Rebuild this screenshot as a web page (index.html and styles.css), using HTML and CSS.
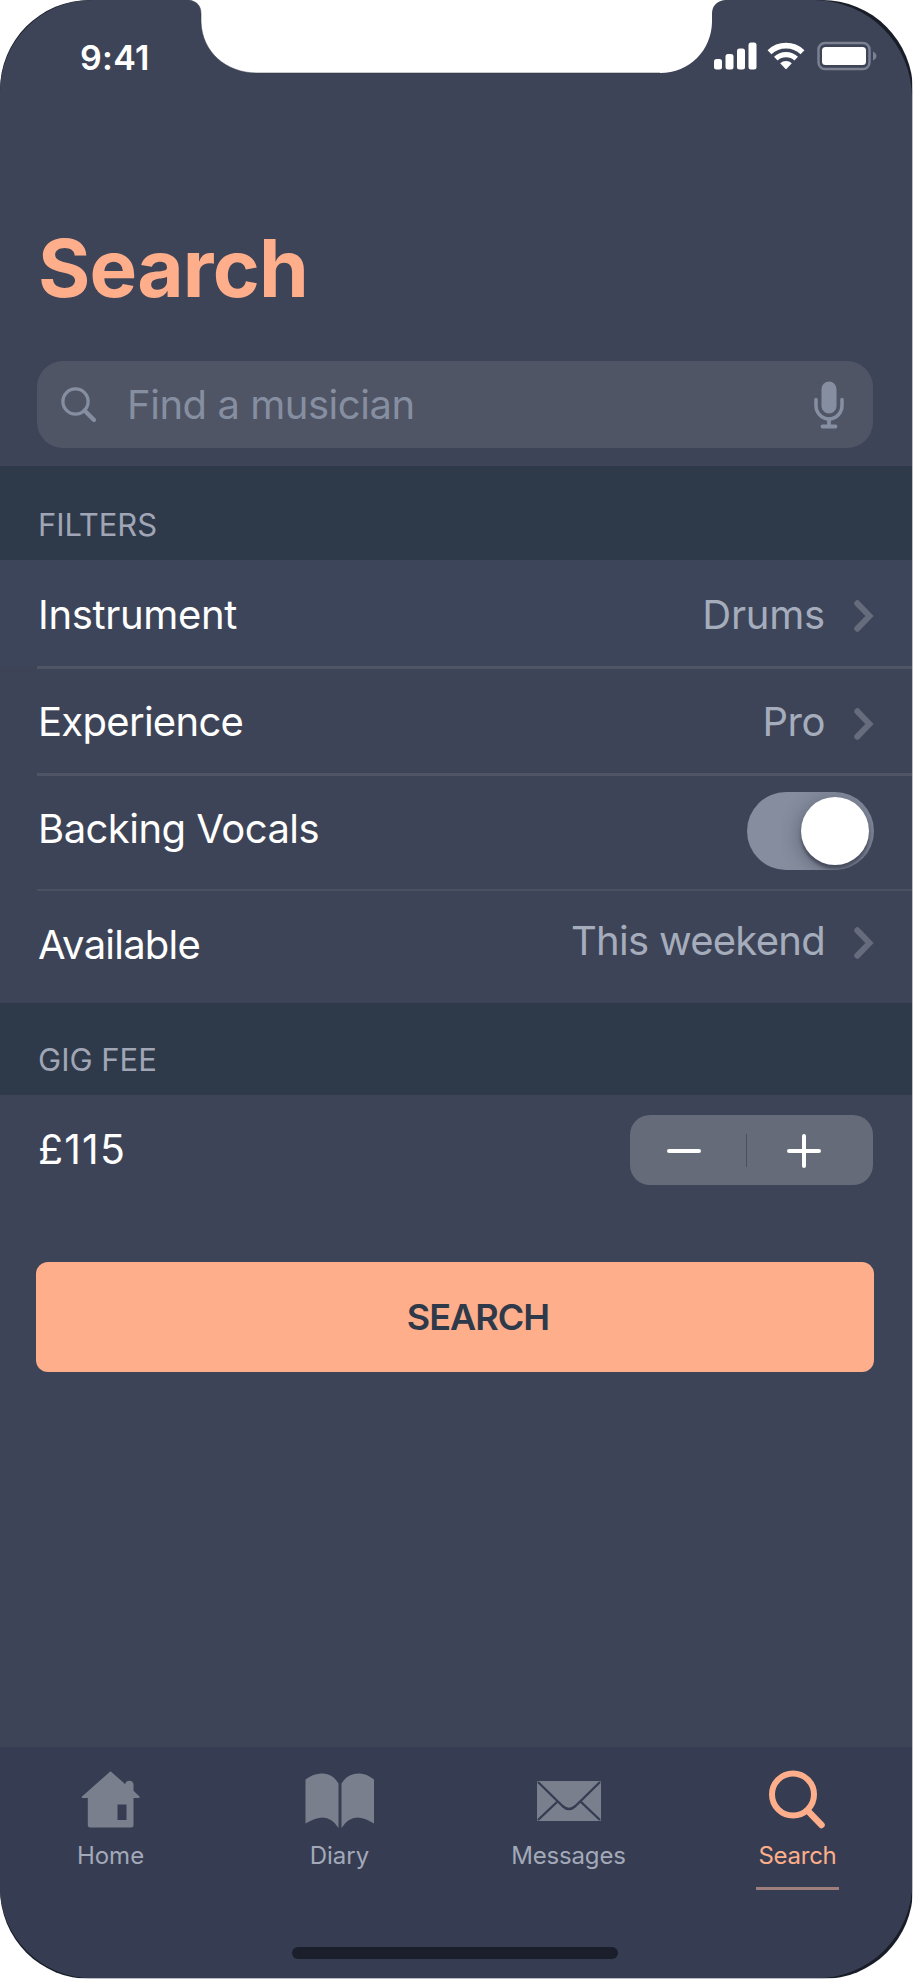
FILE: index.html
```
<!DOCTYPE html>
<html lang="en">
<head>
<meta charset="utf-8">
<title>Search</title>
<link rel="stylesheet" href="styles.css">
</head>
<body>
<div class="frame">
  <div class="phone">
    <header class="status">
      <span class="time">9:41</span>
      <div class="indicators">
        <svg class="signal" width="43" height="28" viewBox="0 0 43 28" fill="#fff">
          <rect x="0" y="17" width="8" height="10.500" rx="2.500"/>
          <rect x="11.500" y="12" width="8" height="15.500" rx="2.500"/>
          <rect x="23" y="6.500" width="8" height="21" rx="2.500"/>
          <rect x="34.500" y="0.500" width="8" height="27" rx="2.500"/>
        </svg>
        <svg class="wifi" width="38" height="28" viewBox="0 0 38 28">
          <path d="M2.500 10.200A24 24 0 0 1 35.500 10.200" fill="none" stroke="#fff" stroke-width="5.600"/>
          <path d="M8.800 16.600A15 15 0 0 1 29.200 16.600" fill="none" stroke="#fff" stroke-width="5.200"/>
          <path d="M13.200 21.200A8.600 8.600 0 0 1 24.800 21.200L19.700 26.800Q19 27.500 18.300 26.800Z" fill="#fff"/>
        </svg>
        <svg class="battery" width="60" height="30" viewBox="0 0 60 30">
          <rect x="1.500" y="2" width="51" height="26" rx="6.500" fill="none" stroke="#7b8190" stroke-width="2.500"/>
          <rect x="5" y="6" width="44" height="18" rx="3.500" fill="#fff"/>
          <path d="M56 10.500Q59.500 12.500 59.500 15T56 19.500Z" fill="#7b8190"/>
        </svg>
      </div>
    </header>

    <h1 class="title">Search</h1>

    <div class="field">
      <svg class="glass" width="36" height="36" viewBox="0 0 36 36" fill="none" stroke="#858fa1">
        <circle cx="14.500" cy="14.500" r="12.600" stroke-width="3.300"/>
        <path d="M23.500 23.500L33 33" stroke-width="4.200" stroke-linecap="round"/>
      </svg>
      <span class="placeholder">Find a musician</span>
      <svg class="mic" width="30" height="48" viewBox="0 0 30 48">
        <rect x="7.500" y="0.500" width="15" height="32" rx="7.500" fill="#858fa1"/>
        <path d="M2 18.500V24.500A13 13.500 0 0 0 28 24.500V18.500" fill="none" stroke="#858fa1" stroke-width="3.500" stroke-linecap="round"/>
        <path d="M15 38V45M8.500 45.500H21.500" fill="none" stroke="#858fa1" stroke-width="3.800" stroke-linecap="round"/>
      </svg>
    </div>

    <h2 class="band band-filters">FILTERS</h2>

    <div class="rows">
      <div class="row row-instrument">
        <span class="label">Instrument</span>
        <span class="value">Drums</span>
        <svg class="chevron" width="20" height="32" viewBox="0 0 20 32"><path d="M3.300 3.300L15.500 16L3.300 28.700"/></svg>
      </div>
      <div class="row row-experience">
        <span class="label">Experience</span>
        <span class="value">Pro</span>
        <svg class="chevron" width="20" height="32" viewBox="0 0 20 32"><path d="M3.300 3.300L15.500 16L3.300 28.700"/></svg>
      </div>
      <div class="row row-vocals">
        <span class="label">Backing Vocals</span>
        <span class="switch"><span class="knob"></span></span>
      </div>
      <div class="row row-available">
        <span class="label">Available</span>
        <span class="value">This weekend</span>
        <svg class="chevron" width="20" height="32" viewBox="0 0 20 32"><path d="M3.300 3.300L15.500 16L3.300 28.700"/></svg>
      </div>
    </div>

    <h2 class="band band-fee">GIG FEE</h2>

    <div class="fee">
      <span class="label amount">£115</span>
      <div class="stepper">
        <svg class="step" width="36" height="36" viewBox="0 0 36 36"><path d="M3 18H33"/></svg>
        <span class="split"></span>
        <svg class="step" width="36" height="36" viewBox="0 0 36 36"><path d="M3 18H33M18 3V33"/></svg>
      </div>
    </div>

    <div class="submit"><span>SEARCH</span></div>

    <nav class="tabs">
      <div class="tab tab-home">
        <svg class="icon" width="70" height="62" viewBox="0 0 70 62" fill="#7a7f8d">
          <path fill-rule="evenodd" d="M34.500 2.200L49.300 15.200V15Q50 11.800 53.500 11.800T57.500 15.500V21.800L63.500 27.600Q64 29 62.500 29H57.500V56Q57.500 58.500 55 58.500H14.300Q11.800 58.500 11.800 56V29H7Q5 29 6 27.600ZM41.500 35.500V51H50.500V35.500Z"/>
        </svg>
        <span>Home</span>
      </div>
      <div class="tab tab-diary">
        <svg class="icon" width="70" height="62" viewBox="0 0 70 62" fill="#7a7f8d">
          <path d="M.5 10.500Q9 4 17.500 4.500Q28 5 33.500 14.500V59Q27 48.500 17.500 48.500Q10.500 48.500 .5 54.500Z"/>
          <path d="M69 10.500Q61 4 53.500 4.500Q42 5 36.500 14.500V59Q43 48.500 52.500 48.500Q59.500 48.500 69 54.500Z"/>
        </svg>
        <span>Diary</span>
      </div>
      <div class="tab tab-messages">
        <svg class="icon" width="70" height="62" viewBox="0 0 70 62">
          <rect x="3" y="12" width="64" height="40" rx="1" fill="#7a7f8d"/>
          <path d="M4 13L28.500 37Q35 43 41.500 37L66 13M4 51L23 33M66 51L47 33" fill="none" stroke="#363d52" stroke-width="2.400"/>
        </svg>
        <span>Messages</span>
      </div>
      <div class="tab tab-search">
        <svg class="icon" width="70" height="62" viewBox="0 0 70 62" fill="none" stroke="#feae8a">
          <circle cx="30" cy="25.500" r="21" stroke-width="6"/>
          <path d="M45 42L58.500 56" stroke-width="6.500" stroke-linecap="round"/>
        </svg>
        <span>Search</span>
      </div>
    </nav>
    <div class="home-area"><span class="home-indicator"></span></div>
  </div>

  <svg class="notch" width="540" height="76" viewBox="0 0 540 76">
    <path d="M3 0C13 1 16 7 16 14V22C17 52 41 73 72 73H475C505 73 526.500 50 527 22V14C527 6 532 0.500 541 0Z" fill="#fff"/>
    <path d="M3 0C13 1 16 7 16 14V22C17 52 41 73 72 73H475" fill="none" stroke="#232b3b" stroke-opacity=".5" stroke-width="1"/>
  </svg>
</div>
</body>
</html>
```

FILE: styles.css
```
* { box-sizing: border-box; }

body {
  margin: 0;
  background: #fff;
  font-family: Inter, "Liberation Sans", sans-serif;
}

.frame {
  position: relative;
  width: 913px;
  height: 1979px;
  background: linear-gradient(#191d28, #191d28) 0 0 / 912px 1978px no-repeat, #b9bcc5;
  border-radius: 90px 91px 90px 90px;
  overflow: hidden;
}

.phone {
  display: flex;
  flex-direction: column;
  width: 912px;
  height: 1978px;
  background: #3e4457;
  border-radius: 92px 98px 95px 92px;
  overflow: hidden;
}

.notch {
  position: absolute;
  left: 185px;
  top: 0;
}

/* Status bar */
.status {
  display: flex;
  justify-content: space-between;
  height: 222px;
  padding: 41px 35px 0 80px;
}

.time {
  height: 33px;
  font-size: 34px;
  font-weight: 600;
  line-height: 33px;
  letter-spacing: .3px;
  color: #fff;
}

.indicators {
  display: flex;
  align-items: center;
  height: 30px;
}

.wifi { margin-left: 10px; }
.battery { margin-left: 12px; }

/* Heading and search field */
.title {
  margin: 0;
  padding-left: 38px;
  height: 139px;
  font-size: 80px;
  font-weight: 700;
  line-height: 92px;
  letter-spacing: -.8px;
  color: #feae8a;
}

.field {
  display: flex;
  align-items: center;
  width: 836px;
  height: 87px;
  margin: 0 0 18px 37px;
  padding: 0 29px 0 24px;
  border-radius: 26px;
  background: #505565;
}

.placeholder {
  flex: 1;
  margin-left: 30px;
  font-size: 40px;
  line-height: 50px;
  letter-spacing: -.46px;
  color: #858fa1;
}

.band {
  margin: 0;
  padding-left: 38px;
  font-size: 31px;
  font-weight: 400;
  background: #2e394a;
  color: #a0a6b5;
}

.band-filters { height: 94px; line-height: 118px; letter-spacing: -.1px; }
.band-fee { height: 92px; line-height: 113px; }

/* Filter rows */
.rows { background: linear-gradient(#3d455a 106px, transparent 106px); }

.row {
  display: flex;
  align-items: center;
  margin-left: 37px;
  padding-right: 38px;
}

.label {
  padding-left: 1px;
  font-size: 40px;
  line-height: 50px;
  color: #fff;
}

.value {
  margin-left: auto;
  margin-right: 29px;
  font-size: 40px;
  line-height: 50px;
  color: #a5adbc;
}

.chevron {
  fill: none;
  stroke: #666c7c;
  stroke-width: 6px;
  stroke-linecap: round;
}

.row-instrument { height: 109px; border-bottom: 3px solid #505565; }
.row-instrument .label { margin-top: 3px; letter-spacing: -.33px; }
.row-instrument .value { margin-top: 3px; letter-spacing: -.2px; }
.row-instrument .chevron { margin-top: 5px; }
.row-experience { height: 107px; border-bottom: 3px solid #505565; }
.row-experience .label { margin-top: 1px; letter-spacing: -.7px; }
.row-experience .value { margin-top: 1px; letter-spacing: -.5px; }
.row-experience .chevron { margin-top: 5px; }
.row-vocals { height: 115px; justify-content: space-between; border-bottom: 2px solid #4c5162; }
.row-vocals .label { margin-bottom: 8px; letter-spacing: -.54px; }
.row-available { height: 112px; }
.row-available .label { margin-bottom: 5px; letter-spacing: -.77px; }
.row-available .value { margin-bottom: 13px; letter-spacing: -.72px; }
.row-available .chevron { margin-bottom: 8px; }

.switch {
  display: flex;
  align-items: center;
  justify-content: flex-end;
  width: 127px;
  height: 78px;
  margin-bottom: 4px;
  padding-right: 5px;
  border-radius: 39px;
  background: #858d9e;
  overflow: hidden;
}

.knob {
  width: 68px;
  height: 68px;
  border-radius: 50%;
  background: #fff;
  box-shadow: 0 4px 3px rgba(30, 36, 52, .45), 0 4px 20px rgba(30, 36, 52, .45);
}

/* Fee */
.fee {
  display: flex;
  align-items: center;
  justify-content: space-between;
  height: 108px;
  padding: 0 39px 0 37px;
}

.amount { font-size: 41px; letter-spacing: 1.2px; }

.stepper {
  display: flex;
  align-items: center;
  width: 243px;
  height: 70px;
  margin-top: 2px;
  padding-left: 36px;
  border-radius: 20px;
  background: #666b79;
}

.step {
  margin-top: 2px;
  fill: none;
  stroke: #fff;
  stroke-width: 4px;
  stroke-linecap: round;
}

.split { width: 1px; height: 33px; margin: 0 39px 0 44px; background: #4a5061; }

.submit {
  display: flex;
  align-items: center;
  justify-content: center;
  width: 838px;
  height: 110px;
  margin: 59px 0 0 36px;
  padding: 0 0 1px 46px;
  border-radius: 12px;
  background: #feae8a;
  font-size: 36px;
  font-weight: 600;
  letter-spacing: -1px;
  color: #2e394a;
}

/* Tab bar */
.tabs {
  display: grid;
  grid-template-columns: repeat(4, 229px);
  height: 190px;
  margin: auto 0 0;
  padding-top: 22px;
  background: #363d52;
}

.tab {
  display: flex;
  flex-direction: column;
  align-items: center;
  margin-left: -8px;
  font-size: 24px;
  line-height: 30px;
  color: #a3a9b8;
}

.tab span { margin-top: 10px; }
.tab-messages { letter-spacing: -.17px; }
.tab-search { color: #feae8a; letter-spacing: -.25px; }

.tab-search::after {
  content: "";
  width: 83px;
  height: 3px;
  margin-top: 16px;
  background: #9e7f7b;
}

.home-area {
  display: flex;
  justify-content: center;
  height: 41px;
  padding: 10px 2px 0 0;
  background: #363d52;
}

.home-indicator { width: 326px; height: 12px; border-radius: 6px; background: #1b1f2b; }
```
